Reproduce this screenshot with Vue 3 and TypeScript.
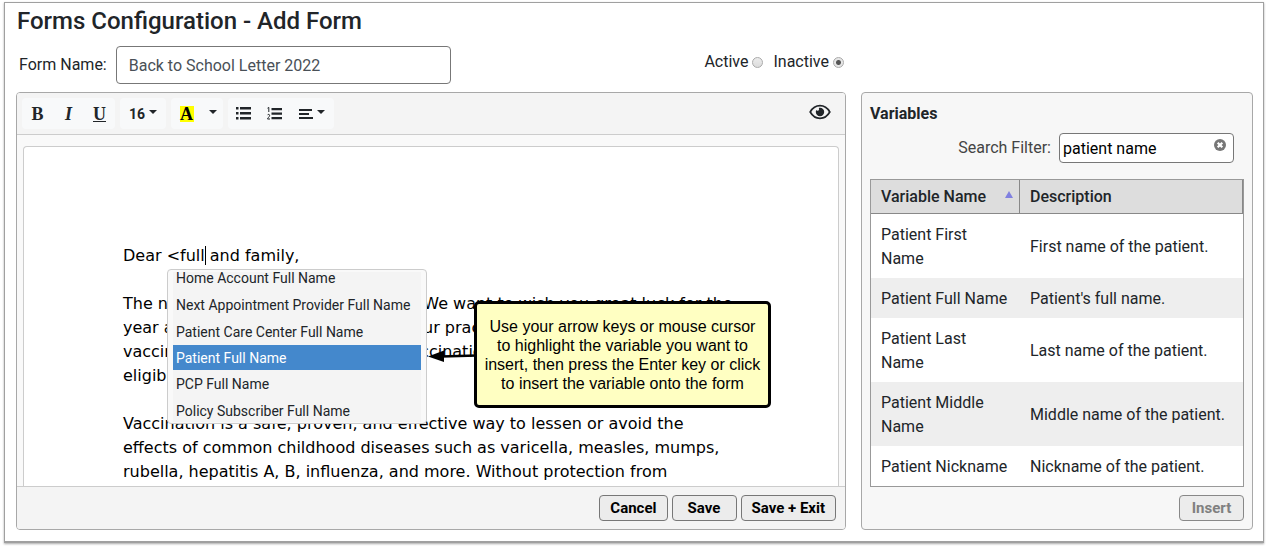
<script setup lang="ts">
import { ref } from 'vue'

interface Variable {
  name: string
  description: string
}

const formName = ref('Back to School Letter 2022')
const status = ref<'active' | 'inactive'>('inactive')
const filter = ref('patient name')
const highlighted = ref('Patient Full Name')

const suggestions: string[] = [
  'Home Account Full Name',
  'Next Appointment Provider Full Name',
  'Patient Care Center Full Name',
  'Patient Full Name',
  'PCP Full Name',
  'Policy Subscriber Full Name',
]

const variables: Variable[] = [
  { name: 'Patient First Name', description: 'First name of the patient.' },
  { name: 'Patient Full Name', description: "Patient's full name." },
  { name: 'Patient Last Name', description: 'Last name of the patient.' },
  { name: 'Patient Middle Name', description: 'Middle name of the patient.' },
  { name: 'Patient Nickname', description: 'Nickname of the patient.' },
]
</script>

<template>
  <main class="window">
    <h1>Forms Configuration - Add Form</h1>
    <div class="form-row">
      <label for="form-name">Form Name:</label>
      <input id="form-name" v-model="formName" class="name-input" type="text" />
      <div class="status">
        <label>Active<input v-model="status" type="radio" name="status" value="active" /></label>
        <label>Inactive<input v-model="status" type="radio" name="status" value="inactive" /></label>
      </div>
    </div>

    <div class="columns">
      <section class="panel editor">
        <div class="toolbar">
          <div class="group">
            <button class="tool serif" type="button" aria-label="Bold">B</button>
            <button class="tool serif italic" type="button" aria-label="Italic">I</button>
            <button class="tool serif underline" type="button" aria-label="Underline">U</button>
          </div>
          <div class="group">
            <button class="tool size" type="button">16<i class="caret"></i></button>
          </div>
          <div class="group">
            <button class="tool serif" type="button" aria-label="Text color"><span class="mark">A</span></button>
            <button class="tool more" type="button" aria-label="More colors"><i class="caret"></i></button>
          </div>
          <div class="group">
            <button class="tool" type="button" aria-label="Bulleted list">
              <svg width="15" height="13" viewBox="0 0 15 13" fill="currentColor">
                <path d="M0 0h2.500v2.500H0zM0 5h2.500v2.500H0zM0 10h2.500v2.500H0zM4 0h11v2.500H4zM4 5h11v2.500H4zM4 10h11v2.500H4z" />
              </svg>
            </button>
            <button class="tool" type="button" aria-label="Numbered list">
              <svg width="15" height="13" viewBox="0 0 15 13" fill="currentColor">
                <path d="M4.500 1h10.500v2.300H4.500zM4.500 5.500h10.500v2.300H4.500zM4.500 10h10.500v2.300H4.500z" />
                <path d="M.5 1.200 1.800.4V5M.4 8.200C.8 7 2.900 7.100 2.600 8.700 2.400 9.900.6 10.900.5 12H3" fill="none" stroke="currentColor" stroke-width="1" />
              </svg>
            </button>
            <button class="tool align" type="button" aria-label="Paragraph alignment">
              <svg width="14" height="12" viewBox="0 0 14 12" fill="currentColor">
                <path d="M0 1h13v2H0zM0 5h10v2H0zM0 9h14v2H0z" />
              </svg><i class="caret"></i>
            </button>
          </div>
          <button class="preview" type="button" aria-label="Preview">
            <svg width="22" height="16" viewBox="0 0 22 16">
              <path d="M1.200 8C3.500 4 7 1.700 11 1.700S18.500 4 20.800 8C18.500 12 15 14.300 11 14.300S3.500 12 1.200 8z" fill="none" stroke="currentColor" stroke-width="1.700" />
              <path d="M11 3.800a4.200 4.200 0 1 1-4.200 4.200c0-.7.200-1.300.4-1.900.5.700 1.600.9 2.300.300.800-.6.800-1.700.2-2.400.4-.1.900-.2 1.300-.2z" fill="currentColor" />
            </svg>
          </button>
        </div>

        <div class="canvas">
          <article class="paper">
            <div class="letter">
              <p>Dear &lt;full<span class="cursor"></span> and family,</p>
              <p>
                The new school year is coming soon. We want to wish you great luck for the<br />
                year ahead. As the kids also return, our practice is here to help with any<br />
                vaccinations are required. Free flu vaccinations are available to all<br />
                eligible patients.
              </p>
              <p>
                Vaccination is a safe, proven, and effective way to lessen or avoid the<br />
                effects of common childhood diseases such as varicella, measles, mumps,<br />
                rubella, hepatitis A, B, influenza, and more. Without protection from
              </p>

              <div class="popup">
                <div class="popup-view">
                  <ul>
                    <li v-for="item in suggestions" :key="item">
                      <button
                        type="button"
                        :class="{ active: item === highlighted }"
                        @mouseenter="highlighted = item"
                      >{{ item }}</button>
                    </li>
                  </ul>
                </div>
              </div>

              <svg class="arrow" width="50" height="14" viewBox="0 0 50 14">
                <path d="M14 7.500 50 6.500" stroke="#000" stroke-width="2.500" />
                <path d="M1 7.500 17 1.500V13z" />
              </svg>
              <aside class="callout">
                Use your arrow keys or mouse cursor<br />
                to highlight the variable you want to<br />
                insert, then press the Enter key or click<br />
                to insert the variable onto the form
              </aside>
            </div>
          </article>
        </div>

        <footer class="actions">
          <button class="btn" type="button">Cancel</button>
          <button class="btn" type="button">Save</button>
          <button class="btn" type="button">Save + Exit</button>
        </footer>
      </section>

      <section class="panel variables">
        <h2>Variables</h2>
        <div class="search">
          <label for="filter">Search Filter:</label>
          <div class="search-box">
            <input id="filter" v-model="filter" type="text" />
            <button type="button" aria-label="Clear filter" @click="filter = ''">
              <svg width="12" height="12" viewBox="0 0 12 12">
                <circle cx="6" cy="6" r="6" fill="#777" />
                <path d="M3.700 3.700 8.300 8.300M8.300 3.700 3.700 8.300" stroke="#fff" stroke-width="2.200" />
              </svg>
            </button>
          </div>
        </div>
        <div class="table-box">
          <table>
            <thead>
              <tr>
                <th class="first">
                  <span class="sort">Variable Name
                    <svg width="8" height="7" viewBox="0 0 8 7"><path d="M4 0 8 7H0z" fill="#8080e0" /></svg>
                  </span>
                </th>
                <th>Description</th>
              </tr>
            </thead>
            <tbody>
              <tr v-for="v in variables" :key="v.name">
                <td>{{ v.name }}</td>
                <td>{{ v.description }}</td>
              </tr>
            </tbody>
          </table>
        </div>
        <footer class="actions insert">
          <button class="btn" type="button" disabled>Insert</button>
        </footer>
      </section>
    </div>
  </main>
</template>

<style>
body {
  margin: 0;
  background: #fff;
}
</style>

<style scoped>
* {
  box-sizing: border-box;
}

.window {
  margin: 2px 3px 4px 4px;
  padding: 0 10px 11px 11px;
  border: 1px solid #a0a0a0;
  border-bottom-width: 2px;
  box-shadow: 0 1px 2px #aaa;
  font-family: Roboto, "Liberation Sans", sans-serif;
  font-size: 16px;
  line-height: 24px;
  color: #212529;
}

button,
input {
  font: inherit;
  color: inherit;
}

h1 {
  margin: 4px 1px 0;
  font-size: 24px;
  line-height: 29px;
  font-weight: 500;
}

.form-row {
  display: flex;
  align-items: center;
  gap: 9px;
  margin: 10px 0 8px 3px;
}

.name-input {
  width: 335px;
  height: 38px;
  padding: 0 12px;
  border: 1px solid #777;
  border-radius: 4px;
  background: #fff;
  color: #495057;
}

.status {
  display: flex;
  gap: 10px;
  margin: 0 0 6px auto;
  padding-right: 409px;
}

.status label {
  display: flex;
  align-items: center;
  gap: 4px;
}

.status input {
  appearance: none;
  width: 11px;
  height: 11px;
  margin: 0;
  border: 1px solid #aaa;
  border-radius: 50%;
  background: linear-gradient(#ececec, #dcdcdc);
}

.status input:checked {
  background: radial-gradient(circle, #555 0 2px, #e6e6e6 3px);
}

.columns {
  display: flex;
  gap: 15px;
}

.panel {
  display: flex;
  flex-direction: column;
  border: 1px solid #a8a8a8;
  border-radius: 4px;
}

.editor {
  flex: 1;
  min-width: 0;
  background: #f9f9f9;
  overflow: hidden;
}

.toolbar {
  display: flex;
  gap: 5px;
  padding: 5px;
  border-bottom: 1px solid #ccc;
  background: #f4f4f4;
}

.group {
  display: flex;
  border-radius: 4px;
  background: #f8f9fa;
}

.tool {
  display: flex;
  align-items: center;
  justify-content: center;
  width: 31px;
  height: 31px;
  padding: 0;
  border: 0;
  background: none;
}

.serif {
  font-family: "Liberation Serif", serif;
  font-size: 18px;
  font-weight: 700;
}

.italic {
  font-style: italic;
}

.underline {
  text-decoration: underline;
}

.size {
  gap: 4px;
  width: 46px;
  font-size: 14px;
  font-weight: 700;
}

.more {
  width: 21px;
}

.align {
  gap: 4px;
  width: 44px;
}

.caret {
  margin-bottom: 3px;
  border: 4px solid transparent;
  border-top-color: currentColor;
  border-bottom: 0;
}

.mark {
  width: 14px;
  background: #ff0;
  color: #000;
  line-height: 16px;
}

.preview {
  display: flex;
  align-items: center;
  margin: 0 9px 3px auto;
  padding: 0;
  border: 0;
  background: none;
}

.canvas {
  flex: 1;
  padding: 11px 6px 0;
}

.paper {
  height: 100%;
  padding: 97px 100px 1px 99px;
  border: 1px solid #ccc;
  border-bottom: 0;
  border-radius: 4px 4px 0 0;
  background: #fff;
}

.letter {
  position: relative;
  font-family: "DejaVu Sans", sans-serif;
  color: #000;
  white-space: nowrap;
}

.letter p {
  margin: 0 0 24px;
}

.letter p:last-of-type {
  margin: 0;
}

.cursor {
  margin-right: -1px;
  border-left: 1px solid #000;
}

.popup {
  position: absolute;
  top: 25px;
  left: 44px;
  padding: 2px 5px 1px;
  border: 1px solid #ccc;
  border-radius: 4px;
  background: #f9f9f9;
}

.popup-view {
  height: 150px;
  overflow: hidden;
  background: #f4f4f4;
}

.popup ul {
  margin: -8px 0 0;
  padding: 0;
  list-style: none;
}

.popup li button {
  display: block;
  width: 248px;
  padding: 2px 3px 0;
  border: 0;
  background: none;
  font-family: Roboto, sans-serif;
  font-size: 14px;
  line-height: 25px;
  text-align: left;
  color: #212529;
}

.popup li .active {
  background: #4488cc;
  color: #fff;
  line-height: 23px;
}

.arrow {
  position: absolute;
  top: 105px;
  left: 304px;
}

.callout {
  position: absolute;
  top: 57px;
  left: 351px;
  width: 297px;
  padding: 13px 0 12px;
  border: 3px solid #000;
  border-radius: 5px;
  background: #ffffc2;
  font-family: "Liberation Sans", Arial, sans-serif;
  font-size: 16px;
  line-height: 19px;
  text-align: center;
}

.actions {
  display: flex;
  justify-content: flex-end;
  gap: 4px;
  padding: 8px 9px;
  border-top: 1px solid #ccc;
  background: #f4f4f4;
}

.btn {
  height: 26px;
  padding: 0 10px;
  min-width: 65px;
  border: 1px solid #777;
  border-radius: 4px;
  background: #ececec;
  color: #000;
  font-size: 15px;
  font-weight: 700;
  line-height: 24px;
}

.btn:disabled {
  border-color: #888;
  color: #808080;
}

.variables {
  width: 392px;
  padding: 0 8px;
  background: #f7f7f7;
}

h2 {
  margin: 9px 0 0;
  font-size: 16px;
  line-height: 24px;
  font-weight: 700;
}

.search {
  display: flex;
  align-items: center;
  justify-content: flex-end;
  gap: 8px;
  margin: 7px 10px 16px 0;
  color: #444;
}

.search-box {
  display: flex;
  align-items: center;
  width: 175px;
  height: 30px;
  padding: 0 7px 0 3px;
  border: 1px solid #777;
  border-radius: 4px;
  background: #fff;
}

.search-box input {
  flex: 1;
  min-width: 0;
  padding: 1px 0 0;
  border: 0;
  outline: 0;
  background: none;
  color: #000;
}

.search-box button {
  display: flex;
  margin-bottom: 6px;
  padding: 0;
  border: 0;
  background: none;
}

.table-box {
  border: 1px solid #999;
  background: #fff;
}

table {
  width: 100%;
  border-collapse: separate;
  border-spacing: 0;
  table-layout: fixed;
}

th {
  padding: 5px 10px 4px;
  border-right: 1px solid #888;
  border-bottom: 1px solid #888;
  background: #ddd;
  font-weight: 500;
  text-align: left;
}

th.first {
  width: 149px;
  padding-right: 6px;
}

.sort {
  display: flex;
  align-items: center;
  justify-content: space-between;
}

.sort svg {
  margin-bottom: 5px;
}

td {
  padding: 9px 10px 7px;
}

td:last-child {
  padding-right: 0;
}

tbody tr:nth-child(even) {
  background: #eee;
}

.insert {
  padding: 8px 0;
  border: 0;
  background: none;
}
</style>
